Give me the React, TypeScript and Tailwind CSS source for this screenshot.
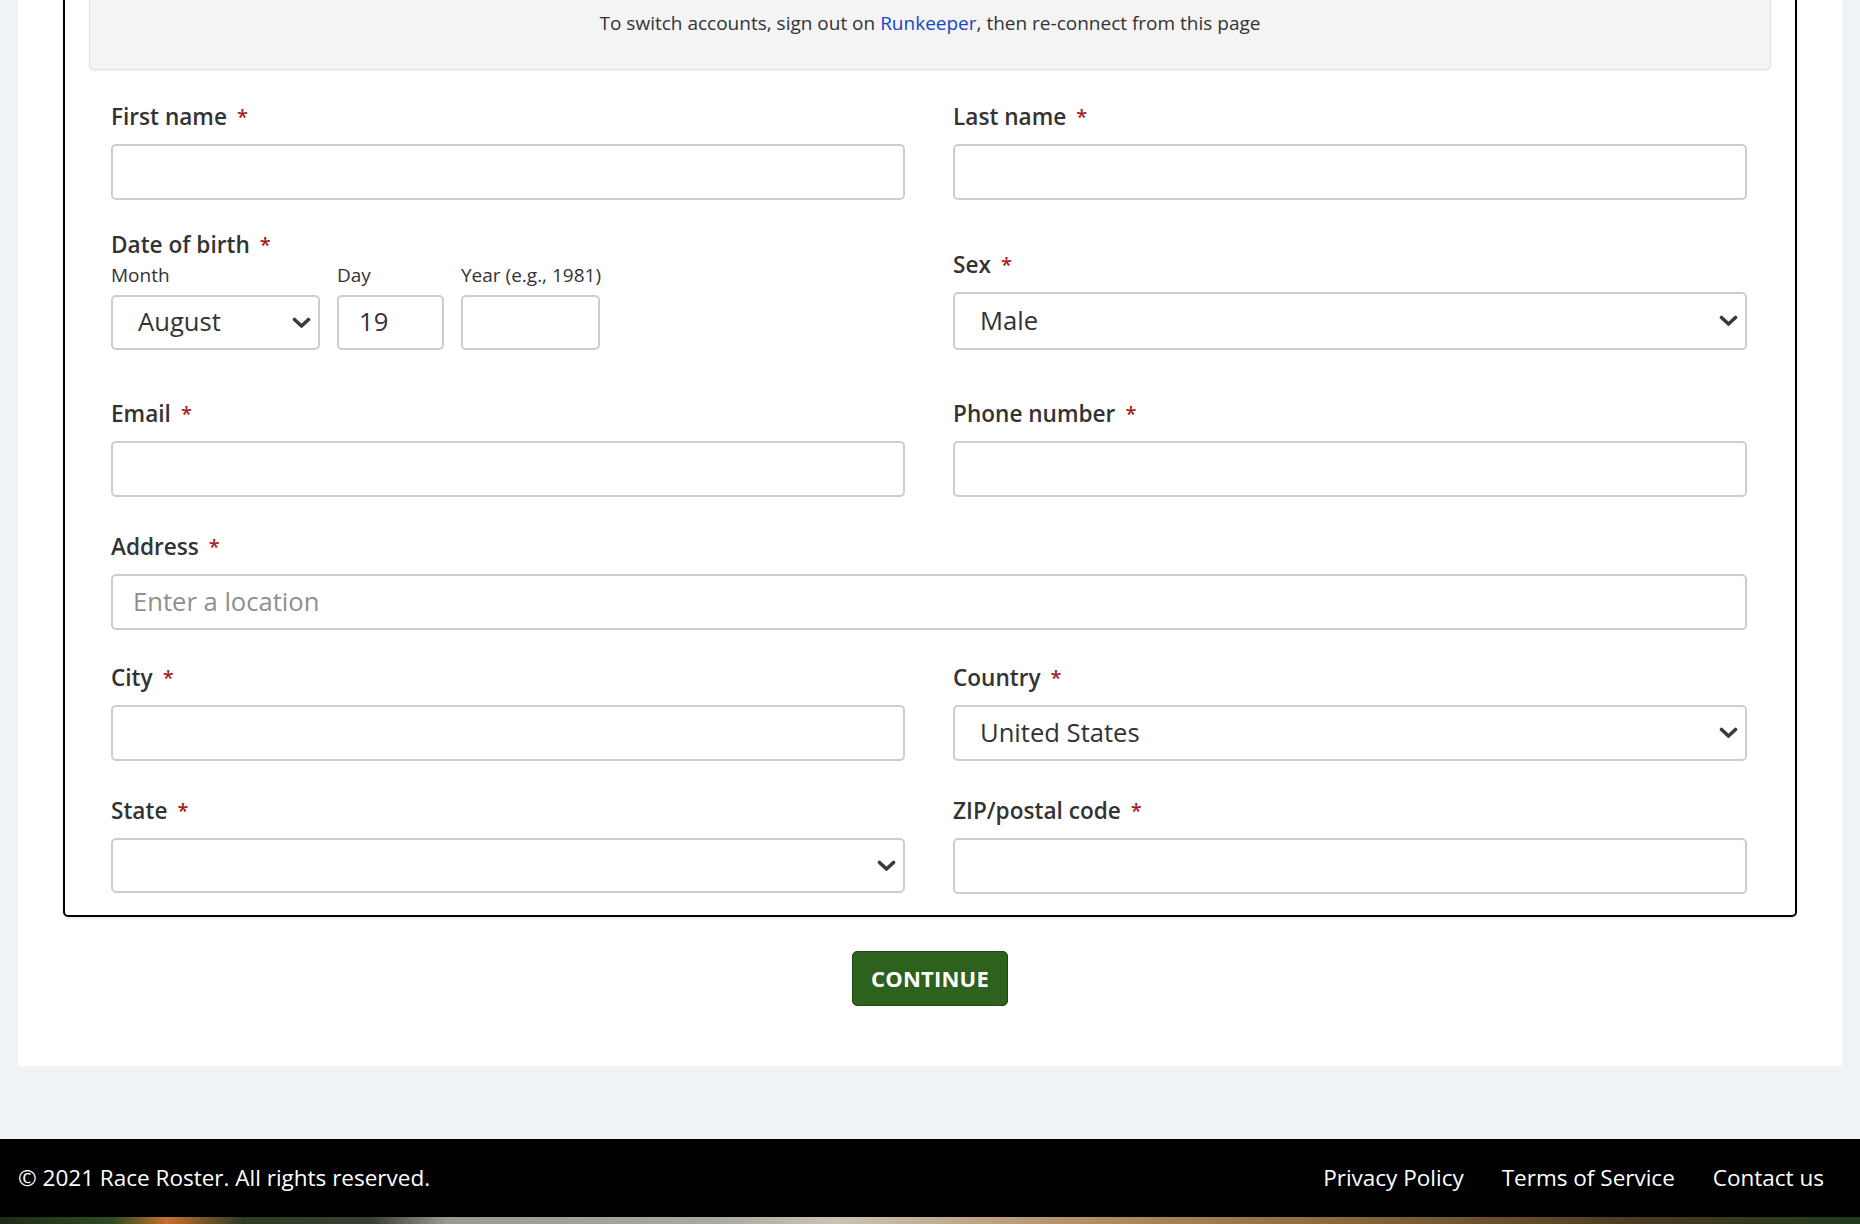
import React from 'react';

const font = { fontFamily: '"Open Sans", "Noto Sans", sans-serif' };

function Chevron() {
  return (
    <svg width="19" height="12" viewBox="0 0 19 12" className="shrink-0">
      <polyline points="2.5,2.5 9.5,9 16.5,2.5" fill="none" stroke="#3a3a44" strokeWidth="3.6" strokeLinecap="round" strokeLinejoin="round" />
    </svg>
  );
}

function Label({ text }: { text: string }) {
  return (
    <div className="flex items-center h-[30px] mb-[12px] text-[22.6px] font-semibold text-[#333]">
      <span>{text}</span>
      <span className="ml-[10px] text-[#a3201b] text-[20px] leading-none">*</span>
    </div>
  );
}

function TextInput({ placeholder, value }: { placeholder?: string; value?: string }) {
  return (
    <div className="h-[56px] w-full rounded-[5px] border-2 border-[#cdcdcd] bg-white flex items-center pl-[20px] text-[25.6px]">
      {value ? <span className="text-[#333]">{value}</span> : placeholder ? <span className="text-[#8f8f8f]">{placeholder}</span> : null}
    </div>
  );
}

function SelectBox({ value, className = '' }: { value?: string; className?: string }) {
  return (
    <div className={`rounded-[5px] border-2 border-[#cdcdcd] bg-white flex items-center justify-between pl-[25px] pr-[7px] text-[25.6px] text-[#333] ${className}`}>
      <span>{value}</span>
      <Chevron />
    </div>
  );
}

function Field({ label, children }: { label: string; children: React.ReactNode }) {
  return (
    <div className="flex flex-col">
      <Label text={label} />
      {children}
    </div>
  );
}

export default function App() {
  return (
    <div className="min-h-screen bg-[#eef3f6] flex flex-col overflow-hidden" style={font}>
      <div className="bg-white mx-[18px] pb-[60px]">
        <div className="mx-[45px] -mt-[60px] border-2 border-black rounded-[5px] shadow-[0_2px_3px_rgba(0,0,0,0.08)]">
          <div className="mx-[24px] mt-[24px] bg-[#f4f4f4] border border-[#dedede] rounded-[5px] shadow-[0_1px_2px_rgba(0,0,0,0.06)] pt-[42px] pb-[32px] text-center text-[19px] leading-[28px] text-[#333]">
            To switch accounts, sign out on <span className="text-[#1745c5]">Runkeeper</span>, then re-connect from this page
          </div>

          <div className="pl-[46px] pr-[48px] pt-[32px] pb-[21px]">
            <div className="grid grid-cols-2 gap-x-[48px]">
              <Field label="First name"><TextInput /></Field>
              <Field label="Last name"><TextInput /></Field>
            </div>

            <div className="grid grid-cols-2 gap-x-[48px] mt-[30px]">
              <div className="flex flex-col">
                <div className="flex items-center h-[30px] text-[22.6px] font-semibold text-[#333]">
                  <span>Date of birth</span>
                  <span className="ml-[10px] text-[#a3201b] text-[20px] leading-none">*</span>
                </div>
                <div className="flex gap-[17px] mt-[2px]">
                  <div className="flex flex-col w-[209px]">
                    <div className="h-[26px] mb-[7px] text-[19px] leading-[26px] text-[#333]">Month</div>
                    <SelectBox value="August" className="w-full h-[55px]" />
                  </div>
                  <div className="flex flex-col w-[107px]">
                    <div className="h-[26px] mb-[7px] text-[19px] leading-[26px] text-[#333]">Day</div>
                    <div className="h-[55px] rounded-[5px] border-2 border-[#cdcdcd] bg-white flex items-center pl-[20px] text-[25.6px] text-[#333]">19</div>
                  </div>
                  <div className="flex flex-col w-[139px]">
                    <div className="h-[26px] mb-[7px] text-[19px] leading-[26px] text-[#333] whitespace-nowrap">Year (e.g., 1981)</div>
                    <div className="h-[55px] rounded-[5px] border-2 border-[#cdcdcd] bg-white" />
                  </div>
                </div>
              </div>
              <div className="self-end">
                <Field label="Sex"><SelectBox value="Male" className="h-[58px]" /></Field>
              </div>
            </div>

            <div className="grid grid-cols-2 gap-x-[48px] mt-[49px]">
              <Field label="Email"><TextInput /></Field>
              <Field label="Phone number"><TextInput /></Field>
            </div>

            <div className="mt-[35px]">
              <Field label="Address"><TextInput placeholder="Enter a location" /></Field>
            </div>

            <div className="grid grid-cols-2 gap-x-[48px] mt-[33px]">
              <Field label="City"><TextInput /></Field>
              <Field label="Country"><SelectBox value="United States" className="h-[56px]" /></Field>
            </div>

            <div className="grid grid-cols-2 gap-x-[48px] mt-[35px]">
              <Field label="State"><SelectBox className="h-[55px]" /></Field>
              <Field label="ZIP/postal code"><TextInput /></Field>
            </div>
          </div>
        </div>

        <div className="flex justify-center mt-[34px]">
          <button className="h-[55px] px-[18px] rounded-[5px] bg-[#2d611d] border border-[#1f4713] text-white text-[22px] font-bold tracking-[0.2px]">
            CONTINUE
          </button>
        </div>
      </div>

      <div className="h-[73px]" />

      <footer className="bg-black h-[78px] flex items-center justify-between pl-[18px] pr-[36px] pb-[1px] text-white text-[22.5px]">
        <span>© 2021 Race Roster. All rights reserved.</span>
        <nav className="flex gap-[38px]">
          <span>Privacy Policy</span>
          <span>Terms of Service</span>
          <span>Contact us</span>
        </nav>
      </footer>
      <div className="h-[8px] bg-[linear-gradient(90deg,#1e2c16_0%,#2f4a22_6%,#c4702c_9%,#2d3d22_13%,#3a3f34_20%,#9a9a92_24%,#a8a89e_38%,#c9c3b2_45%,#b49064_58%,#8a6838_72%,#4a3a20_88%,#1f3a1c_100%)]" />
    </div>
  );
}
